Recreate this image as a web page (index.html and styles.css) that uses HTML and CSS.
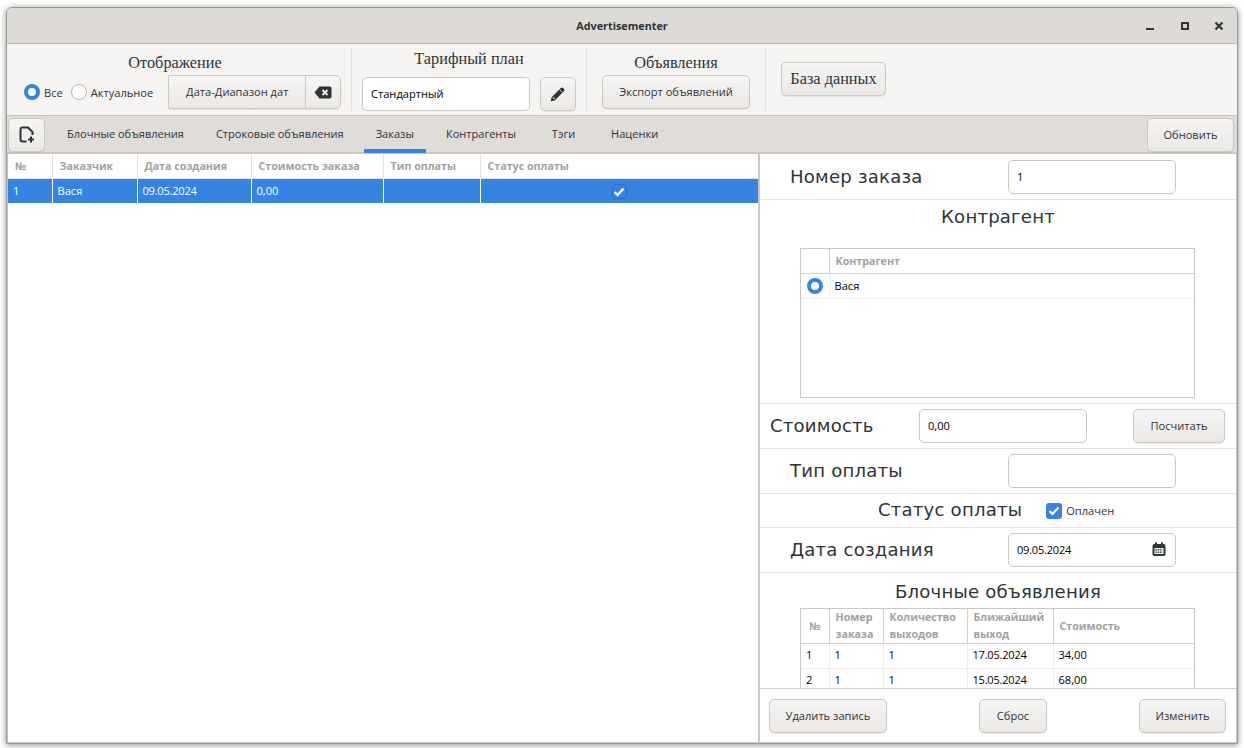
FILE: index.html
```html
<!DOCTYPE html>
<html lang="ru">
  <head>
    <meta charset="UTF-8" />
    <title>Advertisementer</title>
    <link rel="stylesheet" href="styles.css">
  </head>
  <body>
    <div class="window">
      <header class="titlebar">
        <span class="app-title">Advertisementer</span>
        <div class="win-controls">
          <svg width="12" height="12" viewBox="0 0 12 12"><rect x="0" y="8" width="8" height="2" fill="#2e3436"/></svg>
          <svg width="12" height="12" viewBox="0 0 12 12"><path d="M1 2h8v8H1z M3 4v4h4V4z" fill="#2e3436" fill-rule="evenodd"/></svg>
          <svg width="12" height="12" viewBox="0 0 12 12"><path d="M1.500 2.500l7 7M8.500 2.500l-7 7" stroke="#2e3436" stroke-width="2.200" fill="none"/></svg>
        </div>
      </header>

      <section class="toolbar">
        <div class="group group-view">
          <h3>Отображение</h3>
          <div class="group-line">
            <span class="radio on"></span><span class="radio-label">Все</span>
            <span class="radio"></span><span class="radio-label">Актуальное</span>
            <div class="linked">
              <button class="btn btn-range">Дата-Диапазон дат</button>
              <button class="btn btn-clear">
                <svg width="18" height="13" viewBox="0 0 18 13"><path d="M5.500 0.500H15.500Q17.500 0.500 17.500 2.500V10.500Q17.500 12.500 15.500 12.500H5.500L0.500 6.500z" fill="#2e3436"/><path d="M8.500 4l5 5M13.500 4l-5 5" stroke="#f5f4f2" stroke-width="1.800"/></svg>
              </button>
            </div>
          </div>
        </div>
        <div class="group group-plan">
          <h3 class="plan-title">Тарифный план</h3>
          <div class="group-line">
            <div class="field field-plan">Стандартный</div>
            <button class="btn btn-edit">
              <svg width="18" height="18" viewBox="0 0 16 16"><path d="M1.500 14.500l.8-3.600 8.200-8.200q1-1 2 0l.8.8q1 1 0 2l-8.200 8.200z" fill="#2e3436"/><path d="M3.600 11l1.400 1.400" stroke="#f5f4f2" stroke-width="1"/><path d="M9.300 3.900l2.800 2.800" stroke="#f5f4f2" stroke-width=".7"/></svg>
            </button>
          </div>
        </div>
        <div class="group group-ads">
          <h3>Объявления</h3>
          <button class="btn btn-export">Экспорт объявлений</button>
        </div>
        <div class="group group-db">
          <button class="btn btn-db">База данных</button>
        </div>
      </section>

      <nav class="tabbar">
        <button class="btn btn-new">
          <svg width="18" height="18" viewBox="0 0 18 18"><path d="M8.500 15.500H4.500Q2.500 15.500 2.500 13.500V3.500Q2.500 1.500 4.500 1.500H10L14.500 6V9" fill="none" stroke="#2e3436" stroke-width="2"/><path d="M13 10.500v6M10 13.500h6" stroke="#2e3436" stroke-width="2"/></svg>
        </button>
        <div class="tabs">
          <a class="tab">Блочные объявления</a>
          <a class="tab">Строковые объявления</a>
          <a class="tab active">Заказы</a>
          <a class="tab">Контрагенты</a>
          <a class="tab">Тэги</a>
          <a class="tab">Наценки</a>
        </div>
        <button class="btn btn-refresh">Обновить</button>
      </nav>

      <main class="content">
        <div class="orders">
          <table class="grid orders-grid">
            <colgroup><col class="c-num"><col class="c-customer"><col class="c-date"><col class="c-cost"><col class="c-pay"><col></colgroup>
            <thead>
              <tr><th>№</th><th>Заказчик</th><th>Дата создания</th><th>Стоимость заказа</th><th>Тип оплаты</th><th>Статус оплаты</th></tr>
            </thead>
            <tbody>
              <tr class="selected">
                <td>1</td><td>Вася</td><td class="num">09.05.2024</td><td>0,00</td><td></td>
                <td class="center"><span class="mini-check"><svg width="12" height="10" viewBox="0 0 12 10"><path d="M1.500 5l3 3 6-6.500" stroke="#fff" stroke-width="2.400" fill="none"/></svg></span></td>
              </tr>
            </tbody>
          </table>
        </div>

        <aside class="details">
          <div class="details-body">
            <div class="row row-field">
              <label>Номер заказа</label>
              <div class="field">1</div>
            </div>
            <div class="row-block block-customer">
              <h2>Контрагент</h2>
              <div class="table-box box-customer">
                <table class="grid inner-grid">
                  <colgroup><col class="c-first"><col></colgroup>
                  <thead><tr><th></th><th>Контрагент</th></tr></thead>
                  <tbody>
                    <tr><td class="center"><span class="radio on radio-cell"></span></td><td>Вася</td></tr>
                  </tbody>
                </table>
              </div>
            </div>
            <div class="row row-cost">
              <label>Стоимость</label>
              <div class="field">0,00</div>
              <button class="btn btn-calc">Посчитать</button>
            </div>
            <div class="row row-field">
              <label>Тип оплаты</label>
              <div class="field"></div>
            </div>
            <div class="row row-status">
              <label>Статус оплаты</label>
              <span class="check"><svg width="12" height="10" viewBox="0 0 12 10"><path d="M1.500 5l3 3 6-6.500" stroke="#fff" stroke-width="2.200" fill="none"/></svg></span>
              <span class="check-label">Оплачен</span>
            </div>
            <div class="row row-field">
              <label>Дата создания</label>
              <div class="field field-date">
                <span class="num">09.05.2024</span>
                <svg width="14" height="14" viewBox="0 0 14 14"><path d="M3 0.500h2v1.500h4V0.500h2V2h.5Q13.500 2 13.500 4V12Q13.500 14 11.500 14H2.500Q.5 14 .5 12V4Q.5 2 2.500 2H3z" fill="#2e3436"/><path d="M2.500 6h9v6h-9z" fill="#f5f4f2"/><path d="M3.500 7.500h7M3.500 9h7M3.500 10.500h7" stroke="#2e3436" stroke-width=".9" stroke-dasharray="1.500 .8"/></svg>
              </div>
            </div>
            <div class="row-block block-ads">
              <h2>Блочные объявления</h2>
              <div class="table-box box-ads">
                <table class="grid inner-grid">
                  <colgroup><col class="c-first"><col class="c-order"><col class="c-count"><col class="c-near"><col></colgroup>
                  <thead>
                    <tr class="tall"><th class="center">№</th><th>Номер заказа</th><th>Количество выходов</th><th>Ближайший выход</th><th>Стоимость</th></tr>
                  </thead>
                  <tbody>
                    <tr><td>1</td><td>1</td><td>1</td><td class="num">17.05.2024</td><td>34,00</td></tr>
                    <tr><td>2</td><td>1</td><td>1</td><td class="num">15.05.2024</td><td>68,00</td></tr>
                  </tbody>
                </table>
              </div>
            </div>
          </div>
          <footer class="details-foot">
            <button class="btn btn-delete">Удалить запись</button>
            <button class="btn btn-reset">Сброс</button>
            <button class="btn btn-change">Изменить</button>
          </footer>
        </aside>
      </main>
    </div>
  </body>
</html>
```

FILE: styles.css
```css
html,
body {
  height: 100%;
}
body {
  margin: 0;
  background: #fff;
  font-family: "Open Sans", "Noto Sans", sans-serif;
  font-size: 11.1px;
  color: #2e3436;
  overflow: hidden;
}
.window {
  box-sizing: border-box;
  width: 1232px;
  height: 737px;
  margin: 7px 0 0 6px;
  border: 1px solid #9b9893;
  border-radius: 6px 6px 0 0;
  background: #f5f4f2;
  box-shadow: 0 1px 6px rgba(0, 0, 0, 0.45);
  display: flex;
  flex-direction: column;
  overflow: hidden;
}
button {
  font-family: inherit;
  font-size: inherit;
  color: inherit;
}

/* title bar */
.titlebar {
  flex: none;
  height: 36px;
  box-sizing: border-box;
  background: #dedbd7;
  border-bottom: 1px solid #bdb8b1;
  display: flex;
  align-items: center;
  justify-content: center;
  position: relative;
}
.app-title {
  font-weight: 700;
  font-size: 10.8px;
}
.win-controls {
  position: absolute;
  right: 11px;
  top: 12px;
  display: flex;
  gap: 22px;
}

/* common widgets */
.btn {
  box-sizing: border-box;
  height: 34px;
  padding: 0 0 2px;
  border: 1px solid #cdc7c2;
  border-radius: 5px;
  background: linear-gradient(#f6f5f4, #ebe8e5);
  box-shadow: 0 1px 1px rgba(0, 0, 0, 0.07);
  display: flex;
  align-items: center;
  justify-content: center;
}
.field {
  box-sizing: border-box;
  width: 168px;
  height: 34px;
  padding: 0 8px 1px;
  border: 1px solid #cdc7c2;
  border-radius: 5px;
  background: #fff;
  color: #000;
  display: flex;
  align-items: center;
}
.num {
  letter-spacing: -0.25px;
}
.radio {
  box-sizing: border-box;
  display: inline-block;
  width: 16px;
  height: 16px;
  border: 1px solid #b9b3ac;
  border-radius: 50%;
  background: #fff;
  flex: none;
}
.radio.on {
  border: 4px solid #3584e4;
}
.check {
  box-sizing: border-box;
  width: 16px;
  height: 16px;
  border-radius: 3px;
  background: #3584e4;
  display: flex;
  align-items: center;
  justify-content: center;
}

/* top toolbar */
.toolbar {
  flex: none;
  box-sizing: border-box;
  height: 72px;
  padding-top: 4px;
  border-bottom: 1px solid #c8c3bc;
  display: flex;
}
.group {
  box-sizing: border-box;
  height: 63px;
  border-right: 1px solid #e0ddd9;
  display: flex;
  flex-direction: column;
  align-items: center;
}
.group h3 {
  margin: 0;
  height: 27px;
  line-height: 29px;
  font-family: "Liberation Serif", serif;
  font-weight: 400;
  font-size: 16.3px;
}
.group-line {
  display: flex;
  align-items: center;
  align-self: stretch;
}
.group-view {
  width: 345px;
}
.group-view h3 {
  margin-right: 8px;
}
.group-view .group-line {
  padding-left: 17px;
}
.radio-label {
  margin: 0 8px 0 4px;
}
.linked {
  margin-left: 7px;
  display: flex;
}
.btn-range {
  width: 137px;
  border-radius: 0;
  border-right: none;
  border-top-left-radius: 2px;
  border-bottom-left-radius: 2px;
}
.btn-clear {
  width: 36px;
  padding: 0;
  border-radius: 0 5px 5px 0;
}
.group-plan {
  width: 235px;
}
.group-plan .group-line {
  padding-left: 10px;
  padding-top: 4px;
}
.group-plan .plan-title {
  height: 25px;
  line-height: 22px;
}
.btn-edit {
  width: 36px;
  padding: 0;
  margin-left: 10px;
}
.group-ads {
  width: 179px;
}
.btn-export {
  width: 148px;
}
.group-db {
  border-right: none;
  padding: 14px 0 0 15px;
}
.btn-db {
  width: 105px;
  padding: 0;
  font-family: "Liberation Serif", serif;
  font-size: 16.3px;
}

/* tab strip */
.tabbar {
  flex: none;
  box-sizing: border-box;
  height: 36px;
  background: #e0dcd8;
  padding: 2px 3px 0 1px;
  display: flex;
  position: relative;
  z-index: 1;
}
.btn-new {
  width: 37px;
  padding: 0;
  flex: none;
}
.tabs {
  flex: 1;
  display: flex;
  gap: 8px;
  padding-left: 2px;
  margin-left: 8px;
  font-size: 11.05px;
}
.tab {
  box-sizing: border-box;
  height: 35px;
  min-width: 55px;
  padding: 0 12px 4px;
  display: flex;
  align-items: center;
  justify-content: center;
}
.tab.active {
  border-bottom: 4px solid #3584e4;
  padding: 0 12px;
}
.btn-refresh {
  width: 87px;
  flex: none;
}

/* main area */
.content {
  flex: 1;
  min-height: 0;
  background: #fff;
  border: solid #cdc7c2;
  border-width: 2px 1px 1px 1px;
  display: flex;
}
.orders {
  width: 750px;
  flex: none;
  border-right: 2px solid #cdc7c2;
}
.grid {
  width: 100%;
  border-collapse: collapse;
  table-layout: fixed;
}
.grid th {
  height: 24px;
  padding: 0 7px;
  text-align: left;
  font-weight: 700;
  font-size: 10.7px;
  color: #a1a1a1;
  border-right: 1px solid #e4e1dd;
  border-bottom: 1px solid #e4e1dd;
  box-sizing: border-box;
}
.grid th:last-child,
.grid td:last-child {
  border-right: none;
}
.grid td {
  height: 25px;
  padding: 0 5px;
  box-sizing: border-box;
  color: #000;
  border-right: 1px solid #f1efed;
  border-bottom: 1px solid #f1efed;
}
.grid .center {
  text-align: center;
  padding: 0;
}
.c-num {
  width: 44px;
}
.c-customer {
  width: 85px;
}
.c-date {
  width: 114px;
}
.c-cost {
  width: 132px;
}
.c-pay {
  width: 97px;
}
.orders-grid .selected td {
  background: #3584e4;
  color: #fff;
  border-right: 1px solid #fff;
  border-bottom: none;
}
.orders-grid .selected td:last-child {
  border-right: none;
}
.mini-check {
  box-sizing: border-box;
  width: 15px;
  height: 15px;
  border-radius: 3px;
  border: 1px solid #2a6fc4;
  background: #3584e4;
  display: inline-flex;
  align-items: center;
  justify-content: center;
  vertical-align: middle;
}

/* right side form */
.details {
  flex: 1;
  min-width: 0;
  display: flex;
  flex-direction: column;
}
.details-body {
  height: 534px;
  overflow: hidden;
}
.row {
  box-sizing: border-box;
  height: 45px;
  border-bottom: 1px solid #e8e6e3;
  display: flex;
  align-items: center;
}
.row label,
.row-block h2 {
  font-family: "DejaVu Sans", sans-serif;
  font-size: 18.1px;
  font-weight: 400;
  letter-spacing: 0.2px;
}
.row label {
  margin-bottom: 2px;
}
.row-field label {
  width: 218px;
  margin-left: 30px;
}
.row-field:first-child {
  height: 46px;
}
.row-field:first-child label {
  margin-bottom: 0;
}
.row-block {
  box-sizing: border-box;
  border-bottom: 1px solid #e8e6e3;
}
.row-block h2 {
  margin: 0;
  text-align: center;
}
.block-customer {
  height: 204px;
  padding-top: 6px;
}
.block-customer h2 {
  height: 42px;
}
.table-box {
  box-sizing: border-box;
  width: 395px;
  margin-left: 40px;
  border: 1px solid #cdc7c2;
  overflow: hidden;
}
.box-customer {
  height: 150px;
}
.inner-grid th {
  border-color: #d5d0ca;
  padding: 0 6px;
}
.c-first {
  width: 28px;
}
.c-order {
  width: 54px;
}
.c-count {
  width: 84px;
}
.c-near {
  width: 86px;
}
.radio-cell {
  vertical-align: middle;
  margin-top: -2px;
}
.row-cost label {
  width: 149px;
  margin-left: 10px;
}
.btn-calc {
  width: 92px;
  margin-left: 46px;
}
.row-status {
  height: 34px;
}
.row-status label {
  margin-left: 118px;
  margin-right: 24px;
}
.check-label {
  margin-left: 4px;
}
.field-date {
  justify-content: space-between;
  padding: 0 9px 2px 8px;
}
.block-ads {
  padding-top: 8px;
  height: 115px;
  border-bottom: none;
}
.block-ads h2 {
  height: 27px;
}
.box-ads {
  height: 81px;
  border-bottom: none;
}
.box-ads td {
  padding-bottom: 3px;
}
.inner-grid .tall th {
  height: 34px;
  line-height: 17px;
}
.details-foot {
  flex: 1;
  border-top: 1px solid #d5d0ca;
  margin-left: -1px;
  padding: 10px 10px 0 10px;
  display: flex;
  justify-content: space-between;
}
.btn-delete {
  width: 118px;
}
.btn-reset {
  width: 68px;
}
.btn-change {
  width: 87px;
}
```
